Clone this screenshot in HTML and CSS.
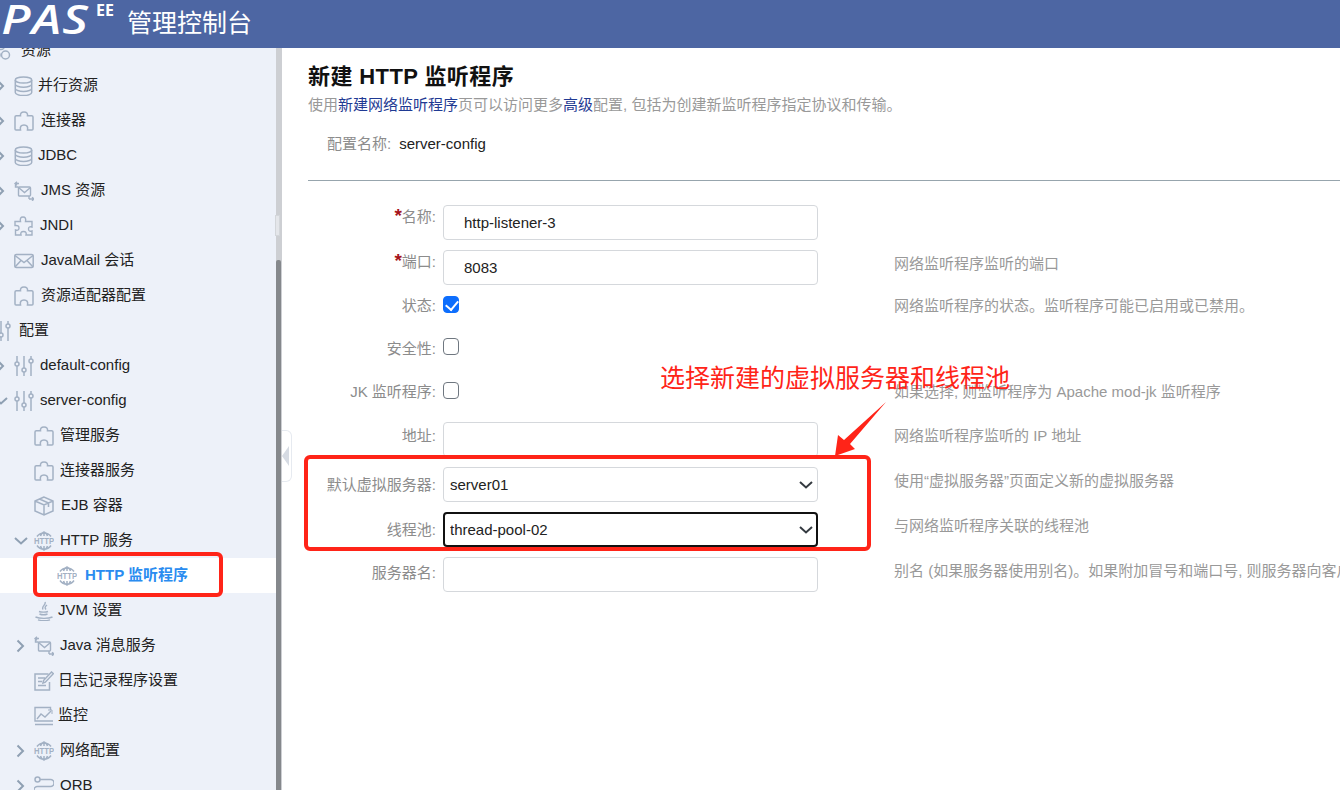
FILE: index.html
```html
<!DOCTYPE html>
<html lang="zh-CN">
<head>
<meta charset="utf-8">
<title>PAS EE 管理控制台</title>
<link rel="stylesheet" href="styles.css">
</head>
<body>
<svg class="defs" width="0" height="0">
  <symbol id="chev-r" viewBox="0 0 14 14"><path d="M3.5 1.5 9 7l-5.500 5.500" fill="none" stroke="currentColor" stroke-width="2"/></symbol>
  <symbol id="chev-d" viewBox="0 0 14 14"><path d="M1 4l6 5.500L13 4" fill="none" stroke="currentColor" stroke-width="2"/></symbol>
  <symbol id="res" viewBox="0 0 20 20"><g fill="none" stroke="currentColor" stroke-width="1.500"><circle cx="14.500" cy="14" r="4"/><circle cx="5" cy="14" r="4"/><circle cx="10" cy="5" r="3.500"/></g></symbol>
  <symbol id="db" viewBox="0 0 20 20"><g fill="none" stroke="currentColor" stroke-width="1.500"><ellipse cx="9.500" cy="4" rx="8.200" ry="3"/><path d="M1.300 4v12.500c0 1.600 3.600 3 8.200 3s8.200-1.400 8.200-3V4M1.300 8.200c0 1.600 3.600 3 8.200 3s8.200-1.400 8.200-3M1.300 12.400c0 1.600 3.600 3 8.200 3s8.200-1.400 8.200-3"/></g></symbol>
  <symbol id="plug" viewBox="0 0 20 20"><path d="M1 18V6q0-1.300 1.300-1.300H6.500Q6 1 10 1t3.500 3.700h4.200Q19 4.700 19 6v12q0 1-1 1h-4.500q1-5-3.500-5t-3.500 5H2q-1 0-1-1z" fill="none" stroke="currentColor" stroke-width="1.500"/></symbol>
  <symbol id="mailx" viewBox="0 0 20 20"><g fill="none" stroke="currentColor" stroke-width="1.400"><path d="M5 2.500H1.500M3 .8 1 2.500 3 4.200M1.500 2.500V6h3"/><rect x="4.500" y="6" width="12" height="9" rx="1"/><path d="m4.500 6.500 6 5 6-5M15 18h4.500M18 16.300l2 1.700-2 1.700M15 15v3"/></g></symbol>
  <symbol id="puzzle" viewBox="0 0 20 20"><path d="M1 5.500h5.500Q5.500 1 9 1t2.500 4.500H18V11q-3.500-1-3.500 2t3.500 2v4h-6q1-3.500-2.500-3.500T7 19H1.500v-5Q5 15 5 12T1 9.500z" fill="none" stroke="currentColor" stroke-width="1.400"/></symbol>
  <symbol id="mail" viewBox="0 0 20 20"><g fill="none" stroke="currentColor" stroke-width="1.500"><rect x=".8" y="3.500" width="18.400" height="13" rx="1.500"/><path d="m1 4.500 9 7 9-7M1 16l6-6.500M19 16l-6-6.500"/></g></symbol>
  <symbol id="slide" viewBox="0 0 20 20"><g fill="none" stroke="currentColor" stroke-width="1.500"><path d="M3 0v6M3 10v10M10 0v12M10 16v4M17 0v3M17 7v13"/><circle cx="3" cy="8" r="2"/><circle cx="10" cy="14" r="2"/><circle cx="17" cy="5" r="2"/></g></symbol>
  <symbol id="cube" viewBox="0 0 20 20"><g fill="none" stroke="currentColor" stroke-width="1.500"><path d="M10 1 1 5v10l9 4 9-4V5zM1 5l9 4 9-4M10 9v10M5.500 3l9 4v4"/></g></symbol>
  <symbol id="http" viewBox="0 0 20 20"><g fill="none" stroke="currentColor" stroke-width="1.500"><path d="M3 5.500a8.600 8.600 0 0 1 14 0M3 14.500a8.600 8.600 0 0 0 14 0M10 1v4M10 15v4M6.500 5q.5-2.800 3.500-4 3 1.200 3.500 4M6.500 15q.5 2.800 3.500 4 3-1.200 3.500-4"/></g><text x="10" y="13" text-anchor="middle" textLength="20" lengthAdjust="spacingAndGlyphs" class="http-t">HTTP</text></symbol>
  <symbol id="java" viewBox="0 0 20 20"><g fill="none" stroke="currentColor" stroke-width="1.400"><path d="M11 1c1.500 3-4 4-2 7.500M13 4c-2 1.500-2.500 2.500-1 4.500M5 10.500c2 .8 7 .8 9 0M5.500 13c2 .8 6 .8 8 0M1.500 16c4 1.800 13 1.800 17 0M4 18.800c3 1 9 1 12 0"/></g></symbol>
  <symbol id="log" viewBox="0 0 20 20"><g fill="none" stroke="currentColor" stroke-width="1.500"><path d="M14.500 3H1v16h14.500v-8"/><path d="m9 12 .5-2.500L17.500 1l1.800 1.700-8 8.500zM4 7h7M4 10.500h4M4 14.500h8"/></g></symbol>
  <symbol id="chart" viewBox="0 0 20 20"><g fill="none" stroke="currentColor" stroke-width="1.400"><path d="M16.500 4V1.500H1V15h18M1 18.500h18M3 13l4-5 4 3 6-6"/><path d="M14 4h4v4" stroke-width="1"/></g></symbol>
  <symbol id="orb" viewBox="0 0 20 20"><g fill="none" stroke="currentColor" stroke-width="1.500"><circle cx="3.500" cy="3.500" r="2.500"/><path d="M6 3.500h10.500a3 3 0 0 1 0 7h-13a3.500 3.500 0 0 0 0 7H18"/></g></symbol>
</svg>

<div class="app">
  <header class="topbar">
    <span class="logo">PAS</span><sup class="logo-ee">EE</sup>
    <span class="product">管理控制台</span>
  </header>

  <div class="body">
    <aside class="side">
      <nav class="tree">
        <div class="row l0"><span class="slot"></span><svg class="ic"><use href="#res"/></svg><span class="t g10">资源</span></div>
        <div class="row l1"><span class="slot"><svg class="ch"><use href="#chev-r"/></svg></span><svg class="ic"><use href="#db"/></svg><span class="t g4">并行资源</span></div>
        <div class="row l1"><span class="slot"><svg class="ch"><use href="#chev-r"/></svg></span><svg class="ic"><use href="#plug"/></svg><span class="t g7">连接器</span></div>
        <div class="row l1"><span class="slot"><svg class="ch"><use href="#chev-r"/></svg></span><svg class="ic"><use href="#db"/></svg><span class="t g4">JDBC</span></div>
        <div class="row l1"><span class="slot"><svg class="ch"><use href="#chev-r"/></svg></span><svg class="ic"><use href="#mailx"/></svg><span class="t g7">JMS 资源</span></div>
        <div class="row l1"><span class="slot"><svg class="ch"><use href="#chev-r"/></svg></span><svg class="ic"><use href="#puzzle"/></svg><span class="t g6">JNDI</span></div>
        <div class="row l1"><span class="slot"></span><svg class="ic"><use href="#mail"/></svg><span class="t g7">JavaMail 会话</span></div>
        <div class="row l1"><span class="slot"></span><svg class="ic"><use href="#plug"/></svg><span class="t g7">资源适配器配置</span></div>
        <div class="row l0"><span class="slot"></span><svg class="ic"><use href="#slide"/></svg><span class="t g8">配置</span></div>
        <div class="row l1"><span class="slot"><svg class="ch"><use href="#chev-r"/></svg></span><svg class="ic"><use href="#slide"/></svg><span class="t g6">default-config</span></div>
        <div class="row l1"><span class="slot"><svg class="ch"><use href="#chev-d"/></svg></span><svg class="ic"><use href="#slide"/></svg><span class="t g6">server-config</span></div>
        <div class="row l2"><span class="slot"></span><svg class="ic"><use href="#plug"/></svg><span class="t g6">管理服务</span></div>
        <div class="row l2"><span class="slot"></span><svg class="ic"><use href="#plug"/></svg><span class="t g6">连接器服务</span></div>
        <div class="row l2"><span class="slot"></span><svg class="ic"><use href="#cube"/></svg><span class="t g7">EJB 容器</span></div>
        <div class="row l2"><span class="slot"><svg class="ch"><use href="#chev-d"/></svg></span><svg class="ic"><use href="#http"/></svg><span class="t g6">HTTP 服务</span></div>
        <div class="row l3 active"><span class="slot"></span><svg class="ic"><use href="#http"/></svg><span class="t g8">HTTP 监听程序</span></div>
        <div class="row l2"><span class="slot"></span><svg class="ic"><use href="#java"/></svg><span class="t g4">JVM 设置</span></div>
        <div class="row l2"><span class="slot"><svg class="ch"><use href="#chev-r"/></svg></span><svg class="ic"><use href="#mailx"/></svg><span class="t g6">Java 消息服务</span></div>
        <div class="row l2"><span class="slot"></span><svg class="ic"><use href="#log"/></svg><span class="t g4">日志记录程序设置</span></div>
        <div class="row l2"><span class="slot"></span><svg class="ic"><use href="#chart"/></svg><span class="t g4">监控</span></div>
        <div class="row l2"><span class="slot"><svg class="ch"><use href="#chev-r"/></svg></span><svg class="ic"><use href="#http"/></svg><span class="t g6">网络配置</span></div>
        <div class="row l2"><span class="slot"><svg class="ch"><use href="#chev-r"/></svg></span><svg class="ic"><use href="#orb"/></svg><span class="t g6">ORB</span></div>
      </nav>
    </aside>
    <div class="scrollbar"><div class="thumb"></div><div class="grip"></div></div>

    <main class="main">
      <div class="collapse"><span class="tri"></span></div>
      <h1 class="title">新建 HTTP 监听程序</h1>
      <p class="desc">使用<a class="lnk">新建网络监听程序</a>页可以访问更多<a class="lnk">高级</a>配置, 包括为创建新监听程序指定协议和传输。</p>
      <div class="cfg"><span class="lab-plain">配置名称:</span><span class="cfg-v">server-config</span></div>
      <hr class="rule">
      <form class="form">
        <div class="f"><label class="lab lab-t"><b class="req">*</b>名称:</label><input class="inp pad" value="http-listener-3"></div>
        <div class="f"><label class="lab lab-t"><b class="req">*</b>端口:</label><input class="inp pad" value="8083"><span class="help">网络监听程序监听的端口</span></div>
        <div class="f fc"><label class="lab lab-c">状态:</label><div class="ctrl"><input class="cb" type="checkbox" checked></div><span class="help h0">网络监听程序的状态。监听程序可能已启用或已禁用。</span></div>
        <div class="f fc"><label class="lab lab-c">安全性:</label><div class="ctrl"><input class="cb cb-up" type="checkbox"></div></div>
        <div class="f fc fc-end"><label class="lab lab-c">JK 监听程序:</label><div class="ctrl"><input class="cb" type="checkbox"></div><span class="help h0">如果选择, 则监听程序为 Apache mod-jk 监听程序</span></div>
        <div class="f"><label class="lab lab-p">地址:</label><input class="inp"><span class="help">网络监听程序监听的 IP 地址</span></div>
        <div class="f"><label class="lab lab-s">默认虚拟服务器:</label><div class="selw"><select class="sel"><option>server01</option></select><svg class="sel-ch"><use href="#chev-d"/></svg></div><span class="help">使用“虚拟服务器”页面定义新的虚拟服务器</span></div>
        <div class="f"><label class="lab lab-s">线程池:</label><div class="selw"><select class="sel focus"><option>thread-pool-02</option></select><svg class="sel-ch"><use href="#chev-d"/></svg></div><span class="help">与网络监听程序关联的线程池</span></div>
        <div class="f"><label class="lab lab-n">服务器名:</label><input class="inp"><span class="help">别名 (如果服务器使用别名)。如果附加冒号和端口号, 则服务器向客户端发送重定向时将使用该端口号。</span></div>
      </form>
    </main>
  </div>

  <div class="mark mark-nav"></div>
  <div class="mark mark-form"></div>
  <div class="note">选择新建的虚拟服务器和线程池</div>
  <svg class="arrow" viewBox="0 0 60 60" width="60" height="60"><polygon points="54,1 18,43 23,48 3,55 6,34 12,39"/></svg>
</div>
</body>
</html>
```
FILE: styles.css
```css
* { box-sizing: border-box; }
html, body { margin: 0; height: 100%; }
body {
  overflow: hidden;
  background: #fff;
  color: #222;
  font: 15px/20px "Liberation Sans", "Noto Sans CJK SC", sans-serif;
}
.defs { position: absolute; }
.app { position: relative; width: 1340px; height: 790px; overflow: hidden; display: flex; flex-direction: column; }

.topbar {
  flex: none;
  height: 48px;
  background: #4d66a3;
  color: #fff;
  display: flex;
  align-items: flex-start;
  overflow: hidden;
}
.logo {
  font: italic 600 40px/40px "Open Sans", "Liberation Sans", sans-serif;
  letter-spacing: 1px;
  width: 95px;
  margin-top: -1px;
  padding-left: 1px;
  transform: scaleX(1.24);
  transform-origin: left center;
}
.logo-ee { font: 700 16px/16px "Open Sans", "Liberation Sans", sans-serif; width: 31px; margin: 2px 0 0 1px; }
.product { font-size: 25px; line-height: 32px; margin-top: 7px; }

.body { flex: 1; display: flex; min-height: 0; }
.side { width: 276px; flex: none; background: #edf1f9; overflow: hidden; }
.tree { margin: -15px 0 0 -30px; }
.row { display: flex; align-items: center; height: 35px; white-space: nowrap; color: #222; }
.l0 { padding-left: 1px; }
.l1 { padding-left: 24px; }
.l2 { padding-left: 44px; }
.l3 { padding-left: 67px; }
.active { background: #fff; }
.active .t { color: #2a8cf0; font-weight: 700; }
.t { padding-bottom: 2px; }
.slot { width: 20px; flex: none; display: flex; align-items: center; }
.ch { width: 14px; height: 14px; color: #8fa0b3; }
.ic { width: 20px; height: 20px; flex: none; color: #a3b1c4; }
.http-t { font: 700 8.500px "Liberation Sans", sans-serif; fill: currentColor; stroke: none; }
.g4 { margin-left: 4px; }
.g6 { margin-left: 6px; }
.g7 { margin-left: 7px; }
.g8 { margin-left: 8px; }
.g10 { margin-left: 10px; }

.scrollbar { position: relative; width: 6px; flex: none; background: #cdcfd3; }
.thumb { margin-top: 212px; height: 530px; width: 5px; background: #85888c; border-radius: 2px 2px 0 0; }
.grip {
  position: absolute;
  left: -1px;
  top: 167px;
  width: 5px;
  height: 21px;
  background: #e4e6ea;
  border: 1px solid #d3d6da;
}

.main { position: relative; flex: 1; min-width: 0; padding: 14px 0 0 26px; overflow: hidden; }
.collapse {
  position: absolute;
  left: 0;
  top: 382px;
  width: 10px;
  height: 52px;
  background: #fff;
  border: 1px solid #e6eaf0;
  border-left: 0;
  border-radius: 0 6px 6px 0;
  display: flex;
  align-items: center;
}
.tri { border: 10px solid transparent; border-left: 0; border-right: 7px solid #d6dbe3; }
.title { margin: 0; font-size: 22px; line-height: 30px; font-weight: 700; color: #111; letter-spacing: .4px; }
.desc { margin: 3px 0 0; color: #999; white-space: nowrap; }
.lnk { color: #1f3a93; }
.cfg { margin-top: 19px; padding-left: 19px; display: flex; gap: 8px; }
.lab-plain { color: #8c8c8c; }
.cfg-v { color: #222; }
.rule { margin: 26px 0 24px; border: 0; border-top: 1px solid #97a5ad; height: 0; }

.f { display: flex; align-items: flex-start; margin-bottom: 10px; white-space: nowrap; }
.fc { height: 33px; }
.fc-end { height: 31px; margin-bottom: 10px; }
.lab { width: 128px; flex: none; text-align: right; color: #8c8c8c; margin-right: 7px; }
.lab-c { padding-top: 1px; }
.lab-t { padding-top: 2px; }
.lab-p { padding-top: 4px; }
.lab-s { padding-top: 8px; }
.lab-n { padding-top: 6px; }
.req { color: #a4131b; font-weight: 700; font-size: 19px; line-height: 0; }
.inp, .sel {
  display: block;
  width: 375px;
  height: 35px;
  border: 1px solid #d5d8dc;
  border-radius: 4px;
  background: #fff;
  font: inherit;
  color: #222;
  outline: 0;
  padding: 0 6px;
}
.inp { flex: none; }
.pad { padding-left: 20px; }
.selw { position: relative; flex: none; width: 375px; height: 35px; }
.sel { appearance: none; }
.sel.focus { border: 2px solid #111; padding-left: 5px; }
.sel-ch { position: absolute; right: 5px; top: 11px; width: 14px; height: 14px; color: #343a40; pointer-events: none; }
.ctrl { width: 375px; flex: none; }
.cb {
  appearance: none;
  display: block;
  position: relative;
  margin: 1px 0 0;
  width: 16px;
  height: 17px;
  border: 1px solid #6f7780;
  border-radius: 4px;
  background: #fff;
}
.cb-up { margin-top: 0; }
.cb:checked { background: #0d6efd; border-color: #0d6efd; }
.cb:checked::after {
  content: "";
  position: absolute;
  left: 4px;
  top: 1px;
  width: 6px;
  height: 10px;
  border: solid #fff;
  border-width: 0 2px 2px 0;
  transform: rotate(40deg);
}
.help { margin-left: 76px; padding-top: 4px; color: #999; }
.h0 { padding-top: 1px; }

.mark { position: absolute; border: 4px solid #ff2418; border-radius: 6px; pointer-events: none; }
.mark-nav { left: 33px; top: 552px; width: 190px; height: 45px; }
.mark-form { left: 304px; top: 455px; width: 567px; height: 96px; }
.note { position: absolute; left: 660px; top: 361px; font-size: 25px; line-height: 34px; color: #ff2418; white-space: nowrap; }
.arrow { position: absolute; left: 832px; top: 401px; fill: #ff2418; }
```
